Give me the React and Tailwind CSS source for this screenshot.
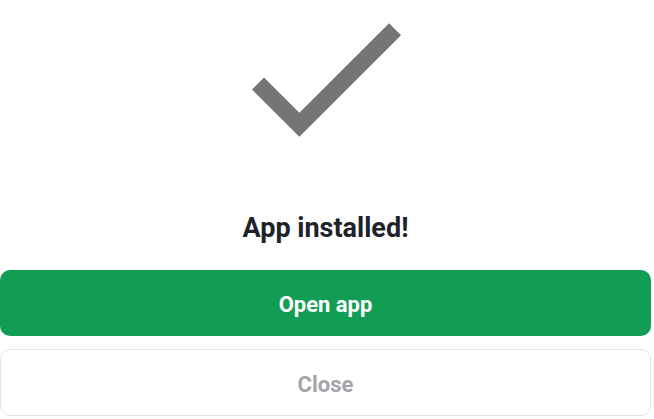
export default function App() {
  return (
    <div className="w-[654px] h-[419px] bg-white overflow-hidden" style={{ fontFamily: "Roboto, 'Noto Sans', sans-serif" }}>
      <div className="w-[651px] flex flex-col items-center">
        <svg
          className="mt-[23px] ml-[1px]"
          width="149"
          height="114"
          viewBox="3.41 5.59 17.59 13.41"
          fill="#757575"
        >
          <path d="M9 16.17L4.83 12l-1.42 1.41L9 19 21 7l-1.41-1.41z" />
        </svg>
        <h1 className="mt-[74px] text-[27px] leading-[34px] font-bold text-[#1d2329]">App installed!</h1>
        <button className="mt-[25px] w-full h-[66px] pt-[2px] rounded-[10px] bg-[#129d55] text-white text-[22px] font-bold">
          Open app
        </button>
        <button className="mt-[13px] w-full h-[67px] pt-[3px] rounded-[10px] border border-[#e4e4e6] bg-white text-[#a4a5aa] text-[22px] font-bold">
          Close
        </button>
      </div>
    </div>
  );
}
